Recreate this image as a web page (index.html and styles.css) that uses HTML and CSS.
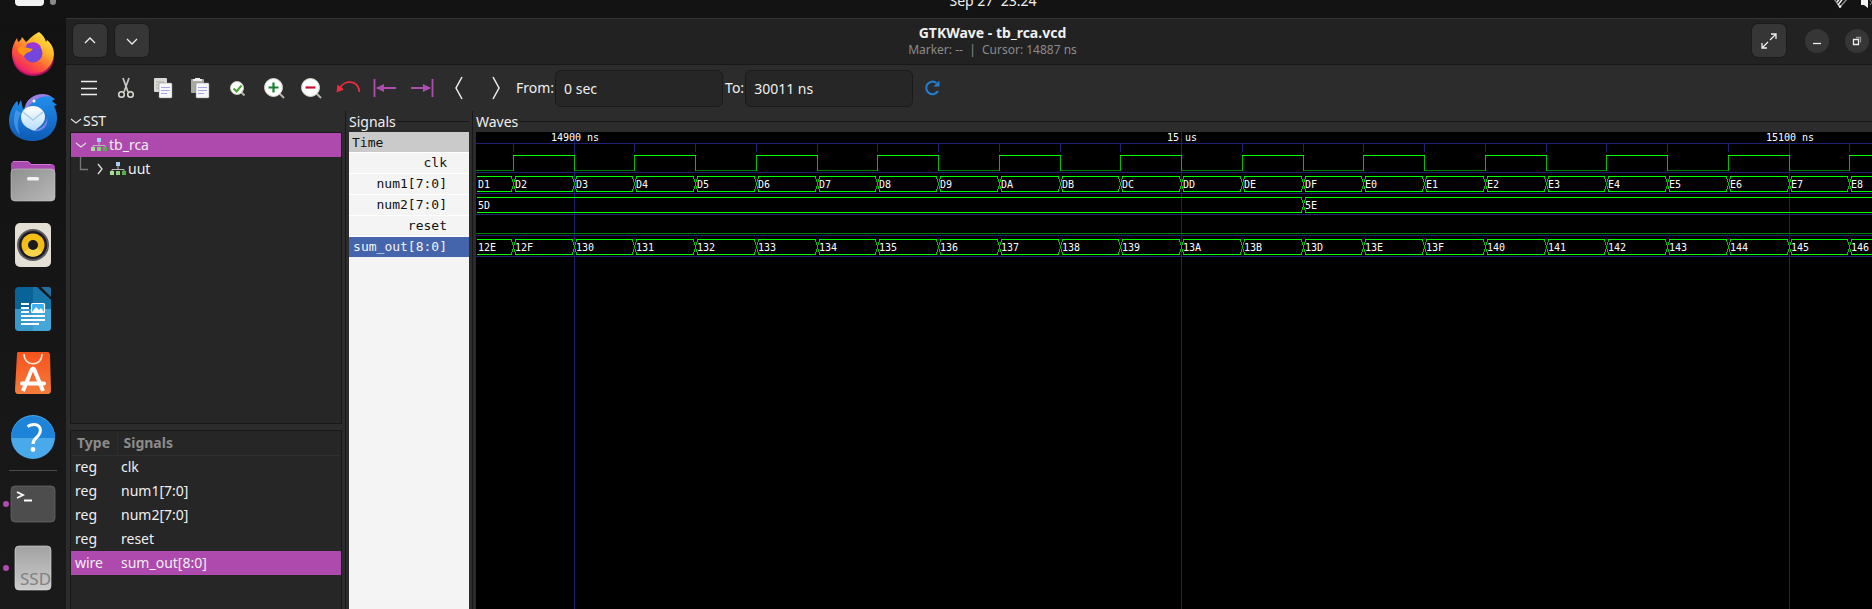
FILE: index.html
```html
<!DOCTYPE html>
<html lang="en">
<head>
<meta charset="utf-8">
<title>GTKWave - tb_rca.vcd</title>
<link rel="stylesheet" href="styles.css">
</head>
<body>
<svg class="defs" width="0" height="0" aria-hidden="true">
  <defs>
    <linearGradient id="ff" x1="0.9" y1="0" x2="0.2" y2="1"><stop offset="0" stop-color="#fff44f"/><stop offset=".35" stop-color="#ffb52a"/><stop offset=".65" stop-color="#ff5a36"/><stop offset="1" stop-color="#e8127c"/></linearGradient>
    <linearGradient id="tb" x1="0" y1="0" x2="0" y2="1"><stop offset="0" stop-color="#2290ee"/><stop offset="1" stop-color="#0d5bb5"/></linearGradient>
    <linearGradient id="env" x1="0" y1="0" x2="0" y2="1"><stop offset="0" stop-color="#ffffff"/><stop offset="1" stop-color="#b5ddfb"/></linearGradient>
    <linearGradient id="gr" x1="0" y1="0" x2="1" y2="1"><stop offset="0" stop-color="#8f8f8f"/><stop offset="1" stop-color="#b8b8b8"/></linearGradient>
    <linearGradient id="ssd" x1="0" y1="0" x2="0" y2="1"><stop offset="0" stop-color="#a2a2a2"/><stop offset="1" stop-color="#cbcbcb"/></linearGradient>
    <linearGradient id="or" x1="0" y1="0" x2="0" y2="1"><stop offset="0" stop-color="#f6521c"/><stop offset="1" stop-color="#f57c3c"/></linearGradient>
    <symbol id="tree" viewBox="0 0 16 14"><path d="M8 4v3M2 10V7.500h12V10" fill="none" stroke="#b9b9b9"/><rect x="6" y="0" width="4" height="4" fill="#a9cdf5"/><rect x="0" y="9" width="4" height="4" fill="#a5dc98"/><rect x="6" y="9" width="4" height="4" fill="#8cd07f"/><rect x="12" y="9" width="4" height="4" fill="#55b04c"/></symbol>
  </defs>
</svg>

<header class="topbar">
  <span class="workspaces"><i class="pill"></i><i class="dot"></i></span>
  <time class="clock">Sep 27&nbsp; 23:24</time>
  <svg class="status" width="44" height="18" viewBox="0 0 44 18" aria-hidden="true"><path d="M4 -4L12 7L19 -1" fill="none" stroke="#8a8a8a" stroke-width="1.500"/><path d="M9 2l5-6M10 5l6-8" stroke="#f2f2f2" stroke-width="1.500"/><circle cx="12" cy="6.500" r="1.300" fill="#f2f2f2"/><path d="M33 0h3l4-4v12l-4-3h-3z" fill="#f2f2f2"/><path d="M42 0l4 5M42 5l4-5" stroke="#8a8a8a"/></svg>
</header>

<div class="desktop">
  <nav class="dock" aria-label="Dock">
    <button class="app" aria-label="Firefox"><svg width="48" height="48" viewBox="0 0 48 48"><path d="M30 3C34 6 36 9 37 13L38 11C43 15 45 20 45 26A21 21 0 1 1 3 23C3 18 5 14 8 9L9 13C11 12 12 11 13 8L17 13C20 11 22 7 30 3Z" fill="url(#ff)"/><circle cx="24" cy="24" r="9.500" fill="#7446dc"/><path d="M17 16C21 12 29 12 32 18C29 18 30 21 27 20C23 18 19 19 17 16Z" fill="#9b35d6"/><path d="M9 19C13 16 18 19 24 20C21 24 17 23 15 27C11 25 8 23 9 19Z" fill="#ff9416"/><path d="M4 25C5 38 15 44 25 44C36 44 44 37 45 26C46 40 35 47 24 47C12 47 2 37 4 25Z" fill="#df1578" opacity=".7"/></svg></button>
    <button class="app" aria-label="Thunderbird"><svg width="48" height="48" viewBox="0 0 48 48"><path d="M12 7L9 13C9 10 9 9 8 8C3 13 0 21 0 28C0 41 11 48 24 48C38 48 48 38 48 25C48 21 47 17 45 13L48 12C46 10 44 9 43 8L46 6C40 1 28 0 22 5C17 8 18 13 14 16C13 13 13 10 12 7Z" fill="url(#tb)"/><path d="M22 5C28 0 38 0 43 4C36 2 29 4 24 9L16 16C16 11 18 8 22 5Z" fill="#9b7ee0"/><circle cx="25" cy="8" r="1.500" fill="#fff"/><path d="M7 17C3 26 5 36 11 42C8 34 8 27 12 20Z" fill="#5aa6f2" opacity=".6"/><path d="M12 24A12 11 0 0 1 36 24C36 31 29 34 26 38C19 36 12 32 12 24Z" fill="url(#env)"/><path d="M14 19L24 27L34 19" fill="none" stroke="#a9cbea" stroke-width="1.500"/><path d="M24 38C33 36 38 30 38 24C40 34 33 39 24 38Z" fill="#7a85e8"/></svg></button>
    <button class="app" aria-label="Files"><svg width="48" height="48" viewBox="0 0 48 48"><path d="M2 8q0-4 4-4h12q2 0 4 3h20q4 0 4 4v8H2z" fill="#a94ab0"/><path d="M4 4.500h15l3 3h20" fill="none" stroke="#cf77d3"/><rect x="2" y="12" width="44" height="32" rx="4" fill="url(#gr)" stroke="#c8c8c8" stroke-width=".6"/><rect x="18" y="20" width="12" height="3.500" rx="1.500" fill="#f2f2f2"/></svg></button>
    <button class="app" aria-label="Rhythmbox"><svg width="48" height="48" viewBox="0 0 48 48"><rect x="6" y="2" width="36" height="44" rx="5" fill="#e4dfd4"/><circle cx="24" cy="24" r="16" fill="#5b5b5e"/><circle cx="24" cy="24" r="14" fill="#1d1b28"/><circle cx="24" cy="24" r="11.500" fill="#f3bd17"/><path d="M15 31L24 24L33 31A11 11 0 0 1 15 31" fill="#f8d44b"/><circle cx="24" cy="24" r="5" fill="#1c1b1b"/></svg></button>
    <button class="app" aria-label="Writer"><svg width="48" height="48" viewBox="0 0 48 48"><path d="M6 6q0-4 4-4h18L42 15v27q0 4-4 4H10q-4 0-4-4z" fill="#086399"/><path d="M24 2h4L42 15v9H24z" fill="#1875a8"/><path d="M6 24h36v18q0 4-4 4H10q-4 0-4-4z" fill="#3799cc"/><path d="M24 24h18v18q0 4-4 4H24z" fill="#45a7d7"/><path d="M32 2h8q2 0 2 2v8z" fill="#236f9b"/><path d="M12 19h8M12 23h8M12 27h8M12 31h24M12 35h24M12 39h18" stroke="#fff" stroke-width="2"/><rect x="22.500" y="18.500" width="13" height="9" rx="1" fill="#3bb1f1" stroke="#fff" stroke-width="1.200"/><path d="M23 27l4-5l3 3l2-2l3 4z" fill="#fff"/></svg></button>
    <button class="app" aria-label="App Center"><svg width="48" height="48" viewBox="0 0 48 48"><path d="M9 3h30q1 0 2 2l1 36q0 4-3 4H9q-3 0-3-4L8 5q0-2 1-2z" fill="url(#or)"/><path d="M15 5c0 13 18 13 18 0" fill="none" stroke="#ffe9dc" stroke-width="1.600"/><path d="M14 42L22.500 21q1.500-3 3 0L34 42" fill="none" stroke="#fff" stroke-width="4"/><path d="M13 34.500h22" stroke="#fff" stroke-width="4" stroke-linecap="round"/></svg></button>
    <button class="app" aria-label="Help"><svg width="48" height="48" viewBox="0 0 48 48"><circle cx="24" cy="24" r="22" fill="#4aa9ea"/><path d="M2 25A22 22 0 0 1 46 25z" fill="#1d84da"/><path d="M18.500 13.500q5-3 9.500-1.500q4.500 2 3 7.500q-1 3-4 5.500q-3 2.500-3 6" fill="none" stroke="#fff" stroke-width="3"/><circle cx="24" cy="36.500" r="2.400" fill="#fff"/></svg></button>
    <hr class="rule">
    <button class="app running" aria-label="Terminal"><svg width="48" height="48" viewBox="0 0 48 48"><rect x="2" y="6" width="44" height="36" rx="4" fill="#4d4d4d" stroke="#666" stroke-width=".8"/><path d="M8 12l6 3l-6 3M15 20.500h8" fill="none" stroke="#fff" stroke-width="1.800"/></svg></button>
    <button class="app running" aria-label="SSD"><svg width="48" height="48" viewBox="0 0 48 48"><rect x="6" y="2" width="36" height="44" rx="4" fill="url(#ssd)" stroke="#e0e0e0" stroke-width=".6"/><text x="11" y="41" class="ssd">SSD</text></svg></button>
  </nav>

  <main class="window">
    <div class="titlebar">
      <button class="square" aria-label="Previous"><svg width="14" height="14" viewBox="0 0 14 14"><path d="M2 9l5-5l5 5"/></svg></button>
      <button class="square" aria-label="Next"><svg width="14" height="14" viewBox="0 0 14 14"><path d="M2 5l5 5l5-5"/></svg></button>
      <div class="heading"><h1>GTKWave - tb_rca.vcd</h1><p>Marker: --&nbsp; |&nbsp; Cursor: 14887 ns</p></div>
      <button class="square" aria-label="Full screen"><svg width="16" height="16" viewBox="0 0 16 16"><path d="M9 7l6-6M10 1h5v5M7 9l-6 6M1 10v5h5"/></svg></button>
      <button class="round first" aria-label="Minimize"><svg width="12" height="12" viewBox="0 0 12 12"><path d="M2 8.500h8"/></svg></button>
      <button class="round" aria-label="Restore"><svg width="12" height="12" viewBox="0 0 12 12"><path d="M2.500 4.500h5v5h-5z"/><path d="M5 2.500h4.500v5" opacity=".5"/></svg></button>
    </div>

    <div class="toolbar">
      <button class="tool" aria-label="Menu"><svg width="22" height="22" viewBox="0 0 22 22"><path d="M3 4.500h16M3 11.500h16M3 17.500h16" stroke="#eee" stroke-width="1.300"/></svg></button>
      <button class="tool" aria-label="Cut"><svg width="22" height="22" viewBox="0 0 22 22"><path d="M8 1l5 14M14 1l-5 14" stroke="#c9c9c5" stroke-width="1.700"/><circle cx="6.500" cy="17.500" r="2.800" fill="none" stroke="#deded8" stroke-width="1.500"/><circle cx="15.500" cy="17.500" r="2.800" fill="none" stroke="#deded8" stroke-width="1.500"/></svg></button>
      <button class="tool" aria-label="Copy"><svg width="22" height="22" viewBox="0 0 22 22"><rect x="2" y="1" width="13" height="14" rx="1" fill="#d9d9d4"/><path d="M4 5h8M4 8h5M4 11h3" stroke="#aaa"/><rect x="7" y="6" width="13" height="15" rx="1" fill="#f7f7fb" stroke="#888" stroke-width=".5"/><path d="M9 10.500h9M9 13.500h9M9 16.500h6" stroke="#a5a5ea"/></svg></button>
      <button class="tool" aria-label="Paste"><svg width="22" height="22" viewBox="0 0 22 22"><rect x="2" y="2" width="13" height="14" rx="1" fill="#a9a9a4"/><path d="M4 4h9v-2h-2v-1H6v1H4z" fill="#eee"/><rect x="7" y="6" width="13" height="15" rx="1" fill="#f7f7fb" stroke="#888" stroke-width=".5"/><path d="M9 10.500h9M9 13.500h9M9 16.500h6" stroke="#a5a5ea"/></svg></button>
      <button class="tool" aria-label="Zoom fit"><svg width="22" height="22" viewBox="0 0 22 22"><path d="M15 15l3.500 3.500" stroke="#b5b5ac" stroke-width="2"/><circle cx="11" cy="11" r="6.500" fill="#fff" stroke="#c9c9c0"/><path d="M7.500 11.500l3 3l5-6" fill="none" stroke="#45a52a" stroke-width="2"/></svg></button>
      <button class="tool" aria-label="Zoom in"><svg width="22" height="22" viewBox="0 0 22 22"><path d="M16 16l5 5" stroke="#b5b5ac" stroke-width="2"/><circle cx="10.500" cy="10.500" r="9" fill="#fff" stroke="#d5d3c8"/><path d="M10.500 5.500v10M5.500 10.500h10" stroke="#12852c" stroke-width="2.200"/></svg></button>
      <button class="tool" aria-label="Zoom out"><svg width="22" height="22" viewBox="0 0 22 22"><path d="M16 16l5 5" stroke="#b5b5ac" stroke-width="2"/><circle cx="10.500" cy="10.500" r="9" fill="#fff" stroke="#d5d3c8"/><path d="M5.500 10.500h10" stroke="#c8102e" stroke-width="2.200"/></svg></button>
      <button class="tool" aria-label="Undo zoom"><svg width="24" height="22" viewBox="0 0 24 22"><path d="M4 11c4-8 18-9 19.500 4" fill="none" stroke="#f02b3d" stroke-width="1.800"/><path d="M1.500 7.500l-1 8l7.500-3z" fill="#f02b3d"/></svg></button>
      <button class="tool" aria-label="Go to start"><svg width="24" height="22" viewBox="0 0 24 22"><path d="M1.500 2v18M4 11h19" stroke="#b04bb0" stroke-width="1.800"/><path d="M3 11l8-4v8z" fill="#b04bb0"/></svg></button>
      <button class="tool" aria-label="Go to end"><svg width="24" height="22" viewBox="0 0 24 22"><path d="M22.500 2v18M1 11h19" stroke="#b04bb0" stroke-width="1.800"/><path d="M21 11l-8-4v8z" fill="#b04bb0"/></svg></button>
      <button class="tool" aria-label="Previous edge"><svg width="22" height="24" viewBox="0 0 22 24"><path d="M14 1L8 12l6 11" fill="none" stroke="#eee" stroke-width="1.500"/></svg></button>
      <button class="tool" aria-label="Next edge"><svg width="22" height="24" viewBox="0 0 22 24"><path d="M8 1l6 11l-6 11" fill="none" stroke="#eee" stroke-width="1.500"/></svg></button>
      <label class="field from">From:<input type="text" value="0 sec"></label>
      <label class="field">To:<input type="text" value="30011 ns"></label>
      <button class="tool reload" aria-label="Reload"><svg width="18" height="18" viewBox="0 0 18 18"><path d="M13.500 4A6.300 6.300 0 1 0 15 12" fill="none" stroke="#1f80d6" stroke-width="2"/><path d="M16.500 1.500v6h-6z" fill="#1f80d6"/></svg></button>
    </div>

    <div class="panes">
      <section class="sst">
        <h2 class="caption"><svg width="12" height="12" viewBox="0 0 12 12"><path d="M1 4l5 4l5-4"/></svg>SST</h2>
        <ul class="tree">
          <li class="node selected"><svg class="arrow" width="12" height="12" viewBox="0 0 12 12"><path d="M1 4l5 4l5-4"/></svg><svg width="16" height="14"><use href="#tree"/></svg>tb_rca</li>
          <li class="node child"><svg class="elbow" width="9" height="24" viewBox="0 0 9 24"><path d="M1.500 0v12.500H9"/></svg><svg class="arrow" width="12" height="12" viewBox="0 0 12 12"><path d="M4 1l4 5l-4 5"/></svg><svg width="16" height="14"><use href="#tree"/></svg>uut</li>
        </ul>
        <div class="list">
          <table>
            <thead><tr><th>Type</th><th>Signals</th></tr></thead>
            <tbody>
              <tr><td>reg</td><td>clk</td></tr>
              <tr><td>reg</td><td>num1[7:0]</td></tr>
              <tr><td>reg</td><td>num2[7:0]</td></tr>
              <tr><td>reg</td><td>reset</td></tr>
              <tr class="selected"><td>wire</td><td>sum_out[8:0]</td></tr>
            </tbody>
          </table>
        </div>
      </section>

      <section class="frame signals">
        <h2 class="legend">Signals</h2>
        <ul class="names">
          <li class="time">Time</li><li>clk</li><li>num1[7:0]</li><li>num2[7:0]</li><li>reset</li><li class="active">sum_out[8:0]</li>
        </ul>
      </section>

      <section class="frame waves">
        <h2 class="legend">Waves</h2>
        <svg id="waves" class="plot" role="img" aria-label="Waveforms"></svg>
      </section>
    </div>
  </main>
</div>
<script src="waves.js"></script>
</body>
</html>
```
FILE: styles.css
```css
* { box-sizing: border-box; }
html, body { height: 100%; }
body {
  margin: 0;
  display: flex;
  flex-direction: column;
  overflow: hidden;
  background: #131313;
  color: #f0f0f0;
  font: 14px/20px "Noto Sans", "Open Sans", sans-serif;
}
h1, h2, p, ul { margin: 0; padding: 0; font-size: inherit; font-weight: 400; list-style: none; }
button { padding: 0; border: 0; background: none; color: inherit; font: inherit; display: grid; place-items: center; flex: none; }
svg { display: block; flex: none; }
.defs { position: absolute; }

.topbar { height: 18px; flex: none; display: flex; align-items: flex-end; }
.workspaces { width: 180px; height: 18px; padding-left: 15px; display: flex; gap: 6px; }
.pill { width: 29px; height: 6px; border-radius: 0 0 4px 4px; background: #f2f2f2; }
.dot { width: 6px; height: 5px; border-radius: 0 0 3px 3px; background: #8a8a8a; }
.clock { flex: 1; padding: 0 22px 7px 0; text-align: center; }

.desktop { flex: 1; min-height: 0; display: flex; }
.dock { width: 66px; flex: none; display: flex; flex-direction: column; align-items: center; gap: 16px; padding-top: 11px; overflow: hidden; background: linear-gradient(#121212, #1a1a1a); }
.app { width: 66px; height: 48px; position: relative; }
.running::before { content: ""; position: absolute; left: 3px; top: 21px; width: 6px; height: 6px; border-radius: 50%; background: #b04bb0; }
.rule { width: 48px; height: 1px; flex: none; margin: -7px 0; border: 0; background: #4a4a4a; }
.ssd { font: 17px "Noto Sans", sans-serif; fill: #818181; }

.window { flex: 1; min-width: 0; display: flex; flex-direction: column; background: #2c2c2c; }
.titlebar { height: 47px; flex: none; display: flex; align-items: center; gap: 8px; padding: 0 3px 2px 7px; background: #222; border-top: 1px solid #343434; border-bottom: 1px solid #181818; }
.titlebar svg { fill: none; stroke: #eee; stroke-width: 1.3; }
.square { width: 34px; height: 33px; border-radius: 6px; background: #363636; box-shadow: 0 0 0 1px #1b1b1b; }
.heading { flex: 1; padding-left: 84px; text-align: center; }
.heading h1 { line-height: 18px; font-weight: 700; }
.heading p { font-size: 12px; line-height: 15px; color: #8b8b8b; }
.round { width: 24px; height: 24px; border-radius: 50%; background: #363636; margin-left: 8px; }
.round.first { margin-left: 11px; }

.toolbar { height: 46px; flex: none; display: flex; align-items: center; padding-left: 4px; }
.tool { width: 37px; height: 36px; }
.field { display: flex; align-items: center; gap: 1px; margin-right: 2px; }
.from { margin-left: 2px; }
.field input { width: 168px; height: 37px; padding: 0 8px; border: 1px solid #1a1a1a; border-radius: 6px; background: #262626; color: #f0f0f0; font: inherit; }
.field input:focus { outline: 1px solid #b04bb0; }
.reload { width: 34px; }

.panes { flex: 1; min-height: 0; display: flex; }
.sst { width: 279px; flex: none; display: flex; flex-direction: column; padding: 0 3px 0 4px; }
.caption { height: 21px; padding-bottom: 2px; display: flex; align-items: center; gap: 1px; flex: none; }
.caption svg, .arrow, .elbow { fill: none; stroke: #ddd; stroke-width: 1.3; }
.elbow { stroke: #777; }
.tree { height: 292px; flex: none; border: 1px solid #181818; background: #262626; }
.node { height: 24px; display: flex; align-items: center; gap: 2px; padding-left: 4px; }
.node .arrow { margin-right: 2px; }
.child { padding-left: 8px; }
.child .arrow { margin-left: 4px; }
.selected { background: #ae49ad; }
.list { flex: 1; min-height: 0; margin-top: 6px; border: 1px solid #181818; border-bottom: 0; background: #262626; }
table { width: 100%; border-collapse: collapse; table-layout: fixed; }
th, td { height: 24px; padding: 0 4px; text-align: left; font-weight: 400; }
th { padding: 0 6px; color: #8b8b8b; font-weight: 700; border-bottom: 1px solid #2e2e2e; }
th:first-child { width: 46px; border-right: 1px solid #2e2e2e; }

.frame { display: flex; flex-direction: column; border-left: 1px solid #181818; }
.legend { height: 21px; flex: none; display: flex; align-items: center; gap: 1px; }
.legend::after { content: ""; flex: 1; height: 1px; background: #181818; }
.signals { width: 127px; flex: none; padding: 0 3px; }
.names { flex: 1; background: #f4f4f4; color: #111; font: 13px/20px "DejaVu Sans Mono", monospace; }
.names li { height: 21px; padding-right: 22px; text-align: right; white-space: nowrap; border-top: 1px solid #fff; }
.names .time { height: 20px; padding: 2px 0 0 3px; text-align: left; line-height: 18px; background: #cacaca; border: 0; }
.names .active { background: #4464ac; color: #f4f4f4; }
.waves { flex: 1; min-width: 0; padding-left: 3px; }
.plot { width: 100%; flex: 1; min-height: 0; background: #000; shape-rendering: crispEdges; font: 10px "DejaVu Sans Mono", monospace; fill: #fff; }
.grid { fill: none; stroke: #202070; }
.high { fill: none; stroke: #00ff00; }
.edge { fill: none; stroke: #00c000; }
.low { fill: none; stroke: #008000; }
```
FILE: waves.js
```js
const svg = document.getElementById("waves");
const NS = "http://www.w3.org/2000/svg";
const ORIGIN = 98;      // x of 14900 ns
const STEP = 60.75;     // pixels per 10 ns

const edgeX = k => Math.floor(ORIGIN + STEP * k);

function path(cls, d) {
  const p = document.createElementNS(NS, "path");
  p.setAttribute("class", cls);
  p.setAttribute("d", d);
  svg.append(p);
}

function label(x, y, text, anchor = "start") {
  const t = document.createElementNS(NS, "text");
  t.setAttribute("x", x);
  t.setAttribute("y", y);
  t.setAttribute("text-anchor", anchor);
  t.textContent = text;
  svg.append(t);
}

function bus(top, width, changes) {
  let high = "", edge = "";
  changes.forEach((c, i) => {
    const x = c.x;
    const end = i + 1 < changes.length ? changes[i + 1].x - 2 : width;
    const start = i ? x + 2 : 1;
    high += `M${start} ${top + .5}H${end + 1}M${start} ${top + 15.5}H${end + 1}`;
    if (i) edge += `M${x - 1.5} ${top + 1}L${x + 2.5} ${top + 15}M${x + 2.5} ${top + 1}L${x - 1.5} ${top + 15}`;
    label(i ? x + 2 : 2, top + 12, c.text);
  });
  path("edge", edge);
  path("high", high);
}

function draw() {
  svg.replaceChildren();
  const width = svg.clientWidth, height = svg.clientHeight;
  const last = Math.floor((width - ORIGIN) / STEP);

  let grid = "";
  for (const y of [11, 40, 61, 82, 103, 124]) grid += `M0 ${y + .5}H${width}`;
  for (let k = -1; k <= last; k++) {
    grid += `M${edgeX(k) + .5} ${k % 10 ? "12V20" : "0V" + height}`;
  }
  path("grid", grid);

  for (let k = 0; k <= last; k += 10) {
    const ns = 14900 + k * 10;
    label(edgeX(k) + 1, 9, ns % 1000 ? ns + " ns" : ns / 1000 + " us", "middle");
  }

  let high = "", low = "", edge = "", x = 0;
  for (let k = -1; k <= last + 1; k++) {
    const next = k <= last ? edgeX(k) : width;
    if (k % 2) low += `M${x} 38.500H${next}`;
    else high += `M${x} 23.500H${next + 1}`;
    if (k <= last) edge += `M${next + .5} 23V39`;
    x = next;
  }
  path("low", low + `M0 101.500H${width}`);
  path("edge", edge);
  path("high", high);

  const num1 = [{ x: 0, text: "D1" }], sum = [{ x: 0, text: "12E" }];
  for (let k = -1; k <= last; k++) {
    num1.push({ x: edgeX(k), text: (0xD3 + k).toString(16).toUpperCase() });
    sum.push({ x: edgeX(k), text: (0x130 + k + (k >= 12 ? 1 : 0)).toString(16).toUpperCase() });
  }
  bus(44, width, num1);
  bus(65, width, [{ x: 0, text: "5D" }, { x: edgeX(12), text: "5E" }]);
  bus(107, width, sum);
}

draw();
addEventListener("resize", draw);
```
